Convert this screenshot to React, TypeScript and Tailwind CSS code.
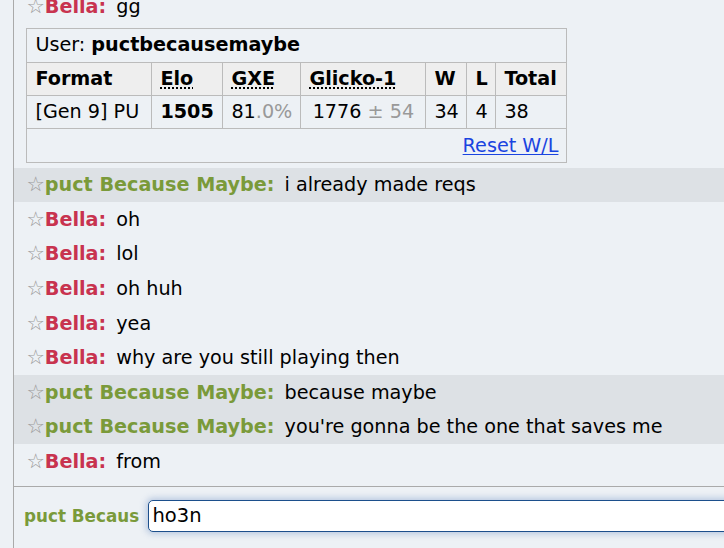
import type { ReactNode } from "react";

type Msg = { user: "bella" | "puct"; text: string; hl?: boolean };

const NAMES = {
  bella: { name: "Bella", color: "text-[#c8334f]" },
  puct: { name: "puct Because Maybe", color: "text-[#7a9a3a]" },
};

function ChatLine({ msg }: { msg: Msg }) {
  const who = NAMES[msg.user];
  return (
    <div
      className={`h-[34.6px] whitespace-nowrap py-[4.8px] pl-[12.4px] leading-[25px] ${msg.hl ? "bg-[#dde1e5]" : ""}`}
    >
      <span className="text-[20.5px] leading-[20px] text-[#9a9a9a]">☆</span>
      <strong className={`font-bold ${who.color}`}>{who.name}:</strong>
      <span className="ml-[10px]">{msg.text}</span>
    </div>
  );
}

function Th({ children, abbr }: { children: ReactNode; abbr?: boolean }) {
  return (
    <th className="border-[1.6px] border-[#bbbbbb] bg-[#eeeeee] px-[8px] py-[3.2px] text-left font-bold leading-[26px]">
      {abbr ? (
        <span className="underline decoration-dotted decoration-[1.6px] underline-offset-[3px]">{children}</span>
      ) : (
        children
      )}
    </th>
  );
}

function Td({ children, className = "" }: { children: ReactNode; className?: string }) {
  return (
    <td className={`border-[1.6px] border-[#bbbbbb] px-[8px] py-[3.2px] leading-[26px] ${className}`}>{children}</td>
  );
}

function RankTable() {
  return (
    <div className="py-[4.8px] pl-[12.4px]">
      <table className="w-[540px] table-fixed border-collapse">
        <colgroup>
          <col className="w-[125px]" />
          <col className="w-[71px]" />
          <col className="w-[78px]" />
          <col className="w-[125px]" />
          <col className="w-[41px]" />
          <col className="w-[29px]" />
          <col className="w-[71px]" />
        </colgroup>
        <tbody>
          <tr>
            <td colSpan={7} className="whitespace-nowrap border-[1.6px] border-[#bbbbbb] px-[8px] py-[3.2px] leading-[26px]">
              User: <strong className="font-bold">puctbecausemaybe</strong>
            </td>
          </tr>
          <tr>
            <Th>Format</Th>
            <Th abbr>Elo</Th>
            <Th abbr>GXE</Th>
            <Th abbr>Glicko-1</Th>
            <Th>W</Th>
            <Th>L</Th>
            <Th>Total</Th>
          </tr>
          <tr>
            <Td className="whitespace-nowrap">[Gen 9] PU</Td>
            <Td className="font-bold">1505</Td>
            <Td>
              81<span className="text-[#999999]">.0%</span>
            </Td>
            <Td className="whitespace-nowrap text-center">
              1776 <span className="text-[#999999]">± 54</span>
            </Td>
            <Td>34</Td>
            <Td>4</Td>
            <Td>38</Td>
          </tr>
          <tr>
            <td colSpan={7} className="border-[1.6px] border-[#bbbbbb] px-[8px] py-[3.2px] text-right leading-[26px]">
              <a href="#" className="text-[#1a44e0] underline underline-offset-[2px]">
                Reset W/L
              </a>
            </td>
          </tr>
        </tbody>
      </table>
    </div>
  );
}

const after: Msg[] = [
  { user: "puct", text: "i already made reqs", hl: true },
  { user: "bella", text: "oh" },
  { user: "bella", text: "lol" },
  { user: "bella", text: "oh huh" },
  { user: "bella", text: "yea" },
  { user: "bella", text: "why are you still playing then" },
  { user: "puct", text: "because maybe", hl: true },
  { user: "puct", text: "you're gonna be the one that saves me", hl: true },
  { user: "bella", text: "from" },
];

export default function App() {
  return (
    <div className="h-[548px] w-[724px] overflow-hidden bg-[#edf1f5] font-['DejaVu_Sans',Verdana,sans-serif] text-[19.2px] text-black">
      <div className="ml-[13px] flex h-full flex-col border-l-[1.6px] border-[#aaaaaa]">
        <div className="h-[473.4px] shrink-0 overflow-hidden">
          <div className="-mt-[11.2px]">
            <ChatLine msg={{ user: "bella", text: "gg" }} />
            <RankTable />
            {after.map((m, i) => (
              <ChatLine key={i} msg={m} />
            ))}
          </div>
        </div>
        <div className="h-[13px] shrink-0" />
        <div className="flex flex-1 items-start border-t-[1.6px] border-[#aaaaaa] pl-[10px] pt-[12.4px]">
          <div className="mt-[5.5px] w-[115px] shrink-0 overflow-hidden whitespace-nowrap text-[16.8px] font-bold leading-[22px] text-[#7a9a3a]">
            puct Because Maybe
          </div>
          <div className="ml-[9px] h-[32px] w-[620px] shrink-0 rounded-[5px] border-[1.6px] border-[#1c4f8c] bg-white pl-[3.5px] text-[19.5px] leading-[29px] shadow-[0_0_6px_2px_rgba(120,150,200,0.45)]">
            ho3n
          </div>
        </div>
      </div>
    </div>
  );
}
